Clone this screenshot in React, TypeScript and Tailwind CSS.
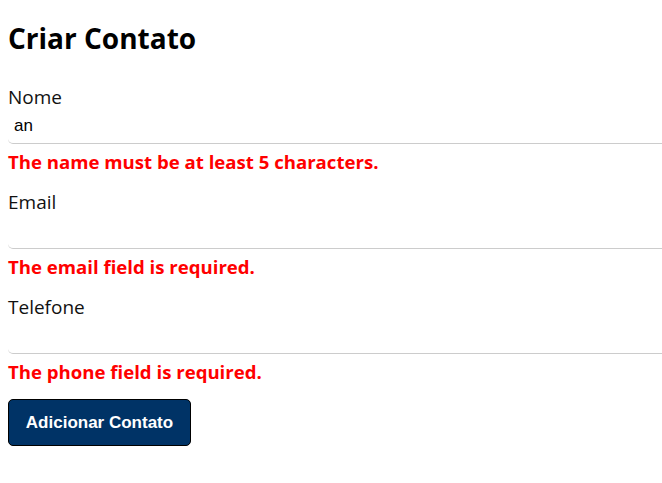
import React from "react";

const font = { fontFamily: "'Open Sans', sans-serif" };

function Field({ label, value, error }: { label: string; value: string; error: string }) {
  return (
    <div className="flex flex-col">
      <label className="block text-[19px] leading-[24px] text-[#111]">{label}</label>
      <input
        readOnly
        value={value}
        className="box-content h-[34px] w-full pl-[6px] pr-[6px] py-0 border-0 border-b border-solid border-b-[#cccccc] rounded-[5px] text-[17px] text-black outline-none bg-transparent"
        style={{ fontFamily: "Arial, 'Liberation Sans', sans-serif" }}
      />
      <p className="mt-[6px] text-[18.6px] leading-[24px] font-bold text-[#ff0000]">{error}</p>
    </div>
  );
}

export default function App() {
  return (
    <div className="w-[662px] h-[483px] overflow-hidden bg-white" style={font}>
      <div className="px-[8px]">
        <h1 className="pt-[20px] text-[28px] leading-[37px] font-bold text-black">Criar Contato</h1>
        <div className="mt-[28px] flex flex-col gap-[16px]">
          <Field label="Nome" value="an" error="The name must be at least 5 characters." />
          <Field label="Email" value="" error="The email field is required." />
          <Field label="Telefone" value="" error="The phone field is required." />
        </div>
        <button
          className="mt-[15px] w-[183px] h-[47px] bg-[#003366] border border-solid border-black rounded-[5px] text-white font-bold text-[17px]"
          style={{ fontFamily: "Arial, 'Liberation Sans', sans-serif" }}
        >
          Adicionar Contato
        </button>
      </div>
    </div>
  );
}
